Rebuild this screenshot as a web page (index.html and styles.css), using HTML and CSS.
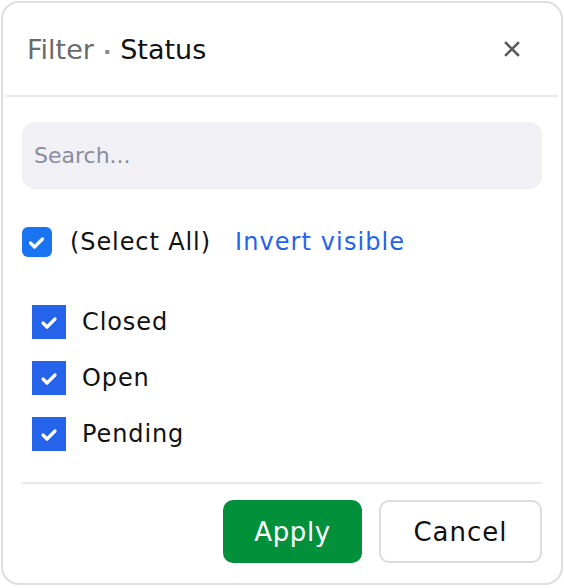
FILE: index.html
```html
<!DOCTYPE html>
<html>
<head>
<meta charset="utf-8">
<link rel="stylesheet" href="styles.css">
</head>
<body>
<div class="panel">
  <div class="header">
    <div class="title"><span class="muted">Filter</span><span class="dot">·</span><span class="strong">Status</span></div>
    <button class="close" aria-label="Close">
      <svg width="16" height="16" viewBox="0 0 16 16"><path d="M2 2 L14 14 M14 2 L2 14" stroke="#5a5a5a" stroke-width="2.6" stroke-linecap="square"/></svg>
    </button>
  </div>
  <div class="content">
    <div class="search">Search...</div>
    <div class="select-row">
      <span class="cb cb-all">
        <svg width="30" height="30" viewBox="0 0 30 30"><path d="M8.5 16 L12.5 20 L20.5 12" fill="none" stroke="#fff" stroke-width="3.2" stroke-linecap="round" stroke-linejoin="round"/></svg>
      </span>
      <span class="label">(Select All)</span>
      <span class="link">Invert visible</span>
    </div>
    <div class="list">
      <div class="item">
        <span class="cb cb-item"><svg width="34" height="34" viewBox="0 0 34 34"><path d="M11 18 L15 22 L23 14" fill="none" stroke="#fff" stroke-width="3.2" stroke-linecap="round" stroke-linejoin="round"/></svg></span>
        <span class="label">Closed</span>
      </div>
      <div class="item">
        <span class="cb cb-item"><svg width="34" height="34" viewBox="0 0 34 34"><path d="M11 18 L15 22 L23 14" fill="none" stroke="#fff" stroke-width="3.2" stroke-linecap="round" stroke-linejoin="round"/></svg></span>
        <span class="label">Open</span>
      </div>
      <div class="item">
        <span class="cb cb-item"><svg width="34" height="34" viewBox="0 0 34 34"><path d="M11 18 L15 22 L23 14" fill="none" stroke="#fff" stroke-width="3.2" stroke-linecap="round" stroke-linejoin="round"/></svg></span>
        <span class="label">Pending</span>
      </div>
    </div>
    <div class="footer">
      <button class="btn btn-apply">Apply</button>
      <button class="btn btn-cancel">Cancel</button>
    </div>
  </div>
</div>
</body>
</html>
```

FILE: styles.css
```css
* { box-sizing: border-box; }
html, body { margin: 0; padding: 0; background: #ffffff; }
body {
  font-family: "DejaVu Sans", "Liberation Sans", sans-serif;
  color: #111111;
}
.panel {
  margin: 1px;
  width: 562px;
  height: 584px;
  border: 2px solid #dedede;
  border-radius: 18px;
  background: #fff;
}
.header {
  height: 94px;
  margin: 0 3px;
  border-bottom: 2px solid #e8e8e8;
  display: flex;
  align-items: center;
  justify-content: space-between;
  padding: 0 38px 0 21px;
}
.title {
  font-size: 27px;
  display: flex;
  align-items: baseline;
}
.muted { color: #6a6a6a; }
.dot { color: #8a8a8a; margin: 0 9px; font-size: 22px; font-weight: bold; }
.strong { color: #111; }
.close {
  border: 0;
  background: none;
  padding: 0;
  width: 16px;
  height: 16px;
  display: flex;
}
.content {
  padding: 25px 19px 0 19px;
}
.search {
  height: 67px;
  background: #f0f0f5;
  border-radius: 13px;
  display: flex;
  align-items: center;
  padding-left: 12px;
  font-size: 22px;
  color: #8c8c9c;
}
.select-row {
  margin-top: 37px;
  height: 32px;
  display: flex;
  align-items: center;
}
.cb {
  display: flex;
  flex: none;
}
.cb-all {
  width: 30px;
  height: 30px;
  border-radius: 6px;
  background: #1a73f0;
}
.cb-item {
  width: 34px;
  height: 34px;
  background: #2563eb;
}
.label {
  font-size: 24px;
  letter-spacing: 0.9px;
  color: #111;
}
.select-row .label { margin-left: 18px; }
.link {
  margin-left: 24px;
  font-size: 24px;
  letter-spacing: 1.1px;
  color: #2563eb;
}
.list {
  margin-top: 47px;
  padding-left: 10px;
  display: flex;
  flex-direction: column;
  gap: 22px;
  padding-bottom: 31px;
  border-bottom: 2px solid #e8e8e8;
}
.item {
  display: flex;
  align-items: center;
  height: 34px;
}
.item .label { margin-left: 16px; }
.footer {
  margin-top: 16px;
  display: flex;
  justify-content: flex-end;
  gap: 17px;
  padding-right: 0;
}
.btn {
  height: 63px;
  border-radius: 10px;
  font-family: "DejaVu Sans", "Liberation Sans", sans-serif;
  font-size: 26px;
  display: flex;
  align-items: center;
  justify-content: center;
  cursor: pointer;
}
.btn-apply {
  width: 139px;
  background: #03903b;
  color: #fff;
  border: 0;
  letter-spacing: 0.6px;
}
.btn-cancel {
  width: 163px;
  background: #fff;
  color: #111;
  border: 2px solid #dcdcdc;
  letter-spacing: 1px;
}
```
